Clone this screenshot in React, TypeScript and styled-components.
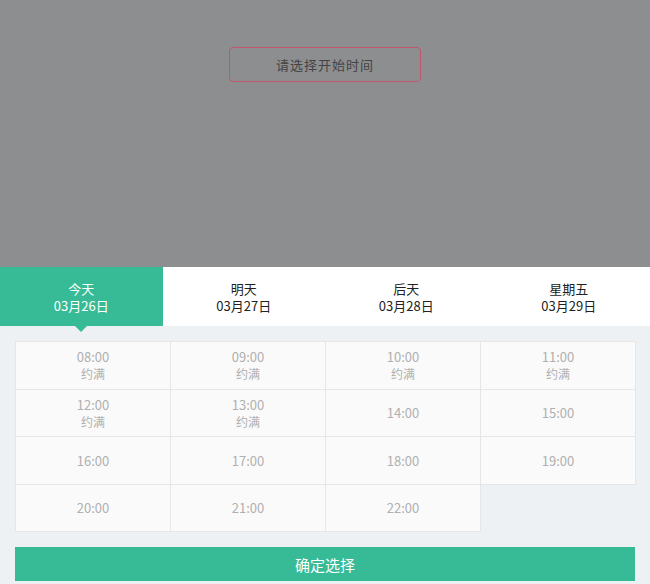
import styled, { createGlobalStyle } from 'styled-components';

const Global = createGlobalStyle`
  body { margin: 0; font-family: "Noto Sans CJK SC", "Liberation Sans", sans-serif; background: #eef1f4; }
`;

const days = [
  { name: '今天', date: '03月26日' },
  { name: '明天', date: '03月27日' },
  { name: '后天', date: '03月28日' },
  { name: '星期五', date: '03月29日' },
];

const slots = [
  { t: '08:00', full: true }, { t: '09:00', full: true }, { t: '10:00', full: true }, { t: '11:00', full: true },
  { t: '12:00', full: true }, { t: '13:00', full: true }, { t: '14:00' }, { t: '15:00' },
  { t: '16:00' }, { t: '17:00' }, { t: '18:00' }, { t: '19:00' },
  { t: '20:00' }, { t: '21:00' }, { t: '22:00' },
];

const App = () => {
  return (
    <Page>
      <Global />
      <Overlay>
        <StartBox>请选择开始时间</StartBox>
      </Overlay>
      <Tabs>
        {days.map((d, i) => (
          <Tab key={d.date} $active={i === 0}>
            <span>{d.name}</span>
            <span>{d.date}</span>
          </Tab>
        ))}
      </Tabs>
      <Body>
        <Grid>
          {slots.map((s) => (
            <Cell key={s.t}>
              <span>{s.t}</span>
              {s.full && <Full>约满</Full>}
            </Cell>
          ))}
        </Grid>
        <Confirm>确定选择</Confirm>
      </Body>
    </Page>
  );
};

const Page = styled.div`
  width: 650px;
  height: 584px;
  overflow: hidden;
`;

const Overlay = styled.div`
  height: 267px;
  background: #8d8e90;
  display: flex;
  justify-content: center;
  padding-top: 47px;
  box-sizing: border-box;
`;

const StartBox = styled.div`
  width: 190px;
  height: 33px;
  border: 1px solid #c0576f;
  border-radius: 4px;
  display: flex;
  align-items: center;
  justify-content: center;
  font-size: 13px;
  color: #444;
  letter-spacing: 1px;
`;

const Tabs = styled.div`
  display: grid;
  grid-template-columns: repeat(4, 1fr);
  height: 59px;
  background: #fff;
`;

const Tab = styled.div<{ $active: boolean }>`
  position: relative;
  display: flex;
  flex-direction: column;
  align-items: center;
  justify-content: center;
  font-size: 13px;
  line-height: 17px;
  color: ${(p) => (p.$active ? '#fff' : '#222')};
  background: ${(p) => (p.$active ? '#36bb96' : '#fff')};
  &::after {
    content: '';
    display: ${(p) => (p.$active ? 'block' : 'none')};
    position: absolute;
    bottom: -6px;
    left: 50%;
    margin-left: -6px;
    border-left: 6px solid transparent;
    border-right: 6px solid transparent;
    border-top: 6px solid #36bb96;
  }
`;

const Body = styled.div`
  padding: 15px 15px 0;
`;

const Grid = styled.div`
  display: grid;
  grid-template-columns: repeat(4, 1fr);
  width: 620px;
`;

const Cell = styled.div`
  height: 48.5px;
  box-sizing: border-box;
  border: 1px solid #e6e6e6;
  margin: 0 -1px -1px 0;
  background: #fafafa;
  display: flex;
  flex-direction: column;
  align-items: center;
  justify-content: center;
  font-size: 13px;
  line-height: 17px;
  color: #b0b0b0;
`;

const Full = styled.span`
  font-size: 12px;
`;

const Confirm = styled.button`
  display: block;
  margin-top: 16px;
  width: 620px;
  height: 34px;
  border: none;
  background: #36bb96;
  color: #fff;
  font-size: 15px;
  font-family: inherit;
`;

export default App;
